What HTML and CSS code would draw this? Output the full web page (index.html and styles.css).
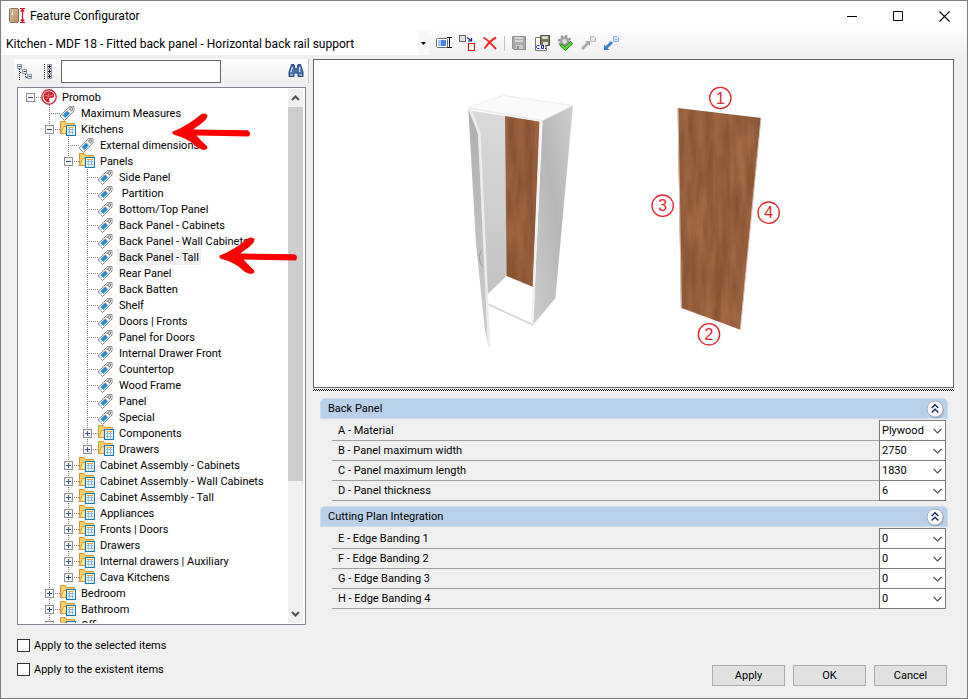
FILE: index.html
```html
<!DOCTYPE html>
<html lang="en">
    <head>
        <meta charset="UTF-8">
        <title>Feature Configurator</title>
        <link rel="stylesheet" href="styles.css">
    </head>
    <body>
        <!-- icons used several times -->
        <svg class="defs" width="0" height="0" aria-hidden="true">
            <symbol id="tag" viewBox="0 0 16 16">
                <path d="M1 11 L10.5 1.5 H15 V6 L5.5 15.5 Z" fill="#f4f4f4" stroke="#8c8c8c" stroke-linejoin="round"/>
                <path d="M9.5 2.8 L11 1.8 H14.7 V5.5 L12.5 7.5 L9 4 Z" fill="#d2d2d2"/>
                <path d="M4 10.3 L8.2 6 L10.6 8.3 L6.3 12.6 Z" fill="#2288d0" stroke="#4aa6de"/>
                <circle cx="12.3" cy="4" r="1.3" fill="#fff" stroke="#777"/>
            </symbol>
            <symbol id="folder" viewBox="0 0 16 16">
                <path d="M.5 12.5 V.5 H5.5 L6.5 2.5 H14.5 V12 Z" fill="#fbcf68" stroke="#d39a3d"/>
                <path d="M1 12.5 L3.5 5.5 H14.5 V12.5 Z" fill="#ffe492" stroke="#d9a041"/>
                <path d="M6.5 4.5 H15.5 V14.5 H6.5 Z" fill="#fff" stroke="#0f7ab8" stroke-width="1.2"/>
                <path d="M8 6.5 H14" stroke="#f0a93c"/>
                <path d="M8 8.5 H14 M8 11.5 H14 M9.5 7 V13.5 M12.5 7 V13.5" stroke="#8fb9d9"/>
            </symbol>
            <symbol id="promob" viewBox="0 0 16 16">
                <circle cx="8" cy="8" r="7.2" fill="#fff" stroke="#c8303a" stroke-width="1.4"/>
                <path d="M9 2.5 C4 1.5 1.5 6 3 9.5 C4 12 6 13.5 8 13.5 C9.5 12.5 7.5 11 8.5 9.5 C9.5 8 11.5 9.5 13 8 C14 5.5 12 3 9 2.5 Z" fill="#d5222e"/>
                <path d="M4 6 L7 7 M7 4 L8 7 L6 10 M9 7 L12 6" fill="none" stroke="#f4b6ba" stroke-width=".6"/>
            </symbol>
            <symbol id="chevron" viewBox="0 0 9 6">
                <path d="M.5 .8 L4.5 4.8 L8.5 .8" fill="none" stroke="#4c4c4c" stroke-width="1.2"/>
            </symbol>
            <symbol id="collapse" viewBox="0 0 20 20">
                <circle cx="11" cy="11.5" r="8" fill="#8b9aae" opacity=".6"/>
                <circle cx="10" cy="10" r="8" fill="#fdfdfe" stroke="#a7b0bf"/>
                <path d="M6.7 9 L10 5.8 L13.3 9 M6.7 13.5 L10 10.3 L13.3 13.5" fill="none" stroke="#1d2c66" stroke-width="1.5"/>
            </symbol>
            <symbol id="arrow" viewBox="0 0 240 112">
                <path d="M2 57 Q50 38 88 5 Q102 -3 109 6 Q112 17 88 34 Q74 44 66 50 L231 52 Q244 60 234 71 L76 68 Q90 84 108 101 Q112 113 94 111 Q80 108 68 95 Q48 77 6 65 Z" fill="#f00"/>
            </symbol>
        </svg>

        <div class="window">
            <header class="titlebar">
                <svg width="17" height="17" viewBox="0 0 17 17">
                    <defs>
                        <linearGradient id="door" x2="1" y2="1">
                            <stop offset="0" stop-color="#dcc19c"/>
                            <stop offset="1" stop-color="#b48d61"/>
                        </linearGradient>
                    </defs>
                    <rect x=".5" y=".5" width="9" height="14" rx="1" fill="url(#door)" stroke="#8c7356"/>
                    <path d="M3.5 4 V7" stroke="#fff"/>
                    <path d="M11 .5 H16 M11 14.5 H16 M13.5 2 V13 M11.8 3.5 L13.5 1.5 L15.2 3.5 M11.8 11.5 L13.5 13.5 L15.2 11.5" fill="none" stroke="#dd1230" stroke-width="1.2"/>
                </svg>
                <h1 class="title">Feature Configurator</h1>
                <div class="win_buttons">
                    <button class="win_button" aria-label="Minimize"><svg width="11" height="11"><path d="M0 5.5 H10" stroke="#000"/></svg></button>
                    <button class="win_button" aria-label="Maximize"><svg width="11" height="11"><path d="M.5 .5 H9.5 V9.5 H.5 Z" fill="none" stroke="#000"/></svg></button>
                    <button class="win_button" aria-label="Close"><svg width="11" height="11"><path d="M.5 .5 L10.5 10.5 M10.5 .5 L.5 10.5" stroke="#000" stroke-width="1.1"/></svg></button>
                </div>
            </header>

            <div class="toolbar">
                <div class="profile">
                    <select class="profile_select" aria-label="Profile">
                        <option>Kitchen - MDF 18 - Fitted back panel - Horizontal back rail support</option>
                    </select>
                    <span class="profile_arrow"><svg width="5" height="3"><path d="M0 0 H5 L2.5 3 Z"/></svg></span>
                </div>
                <button class="tool" aria-label="Rename">
                    <svg width="16" height="16">
                        <rect x=".5" y="3.5" width="11" height="9" rx="1" fill="#fff" stroke="#667085"/>
                        <rect x="2" y="5" width="8" height="6" fill="#4c84e8"/>
                        <path d="M2 5 H5 V11 H2 Z" fill="#a9c6fa"/>
                        <path d="M11 2.5 H16 M11 12.5 H16 M13.5 3 V12" stroke="#111"/>
                    </svg>
                </button>
                <button class="tool" aria-label="Copy">
                    <svg width="16" height="16">
                        <rect x=".5" y=".5" width="6" height="6" fill="#e4e0e8" stroke="#666"/>
                        <path d="M8 2.5 L12 5.5 M12.5 3 V6 H9" fill="none" stroke="#16257d" stroke-width="1.2"/>
                        <rect x="9.5" y="8.5" width="6" height="7" fill="#fff" stroke="#e00b16" stroke-width="1.2"/>
                    </svg>
                </button>
                <button class="tool" aria-label="Delete">
                    <svg width="16" height="16"><path d="M1.5 2.5 C6 5 10 9.5 14 14 M14 2.5 C9 5 5 10 2.5 13.5" fill="none" stroke="#f2262b" stroke-width="2"/></svg>
                </button>
                <span class="separator"></span>
                <button class="tool" aria-label="Save" disabled>
                    <svg width="16" height="16">
                        <path d="M1.5 1.5 H14.5 V14.5 H2.5 L1.5 13.5 Z" fill="#a9a9a9" stroke="#8d8d8d"/>
                        <path d="M4 2 H12 V7 H4 Z" fill="#d9d9d9"/>
                        <path d="M5 10 H12 V14 H5 Z" fill="#ccc"/>
                        <path d="M4.5 4.5 H11.5" stroke="#aaa"/>
                        <path d="M6 11 H8 V14 H6 Z" fill="#858585"/>
                    </svg>
                </button>
                <button class="tool" aria-label="Save as">
                    <svg width="16" height="16">
                        <path d="M1.5 2.5 H12.5 V15.5 H1.5 Z" fill="#fff" stroke="#777"/>
                        <path d="M6.5 .5 H15.5 V10.5 H6.5 Z" fill="#77775b" stroke="#4d4d3c"/>
                        <path d="M8 1 H14 V4 H8 Z" fill="#d6d6c4"/>
                        <path d="M9 7 H14 V10 H9 Z" fill="#ddd"/>
                        <path d="M2 10 H12 V15 H2 Z" fill="#fff"/>
                        <path d="M5.5 10.5 H3.5 L2.5 11.5 V12.5 L3.5 13.5 H5.5 M9.5 10.5 H7.5 V13.5 H9.5 V10 M11.5 10.5 V11.5 M11.5 12.8 V14" fill="none" stroke="#1420d0"/>
                    </svg>
                </button>
                <button class="tool" aria-label="Validate">
                    <svg width="16" height="16">
                        <circle cx="7.5" cy="6.5" r="5.6" fill="none" stroke="#8f8f8f" stroke-width="2" stroke-dasharray="2.2 2.2"/>
                        <circle cx="7.5" cy="6.5" r="3.7" fill="#ddd" stroke="#a1a1a1" stroke-width="2.6"/>
                        <path d="M3 10.5 L5.3 9 L8 11.5 L13.5 6.5 L15.5 9 L8.3 15.5 Z" fill="#5ecf35" stroke="#1b8425"/>
                    </svg>
                </button>
                <button class="tool" aria-label="Export" disabled>
                    <svg width="16" height="16">
                        <path d="M1 13 L6.5 7.5 L5 6 H10 V11 L8.5 9.5 L3 15 Z" fill="#a8a8a8"/>
                        <path d="M10.5 1.5 H14 L15.5 3 V6.5 H10.5 Z" fill="#e2e2e2" stroke="#bcbcbc"/>
                    </svg>
                </button>
                <button class="tool" aria-label="Import">
                    <svg width="16" height="16">
                        <path d="M1 15 V9.5 L2.7 11.2 L8 6 L10 8 L4.7 13.3 L6.4 15 Z" fill="#3d7dca"/>
                        <path d="M10.5 1.5 H14 L15.5 3 V6.5 H10.5 Z" fill="#dcebfb" stroke="#80b2e6"/>
                        <path d="M12 4.5 H14" stroke="#80b2e6"/>
                    </svg>
                </button>
            </div>

            <main class="content">
                <section class="side">
                    <div class="search">
                        <button class="tool" aria-label="Collapse all">
                            <svg width="16" height="17">
                                <path d="M2.5 6 V17 M3 9.5 H6 M8.5 11 V15 M9 14.5 H11" fill="none" stroke="#222" stroke-dasharray="1 1"/>
                                <g fill="#f6f8fa" stroke="#8496a8"><path d="M.5 1.5 H4.5 V5.5 H.5 Z M5.5 6.5 H9.5 V10.5 H5.5 Z M10.5 11.5 H14.5 V15.5 H10.5 Z"/></g>
                                <path d="M1.5 3.5 H4 M6.5 8.5 H9 M11.5 13.5 H14" stroke="#31506f"/>
                            </svg>
                        </button>
                        <button class="tool" aria-label="Expand all">
                            <svg width="16" height="17">
                                <path d="M5.5 1 V16" stroke="#222" stroke-dasharray="1 1"/>
                                <path d="M8.5 1.5 H12.5 V5.5 H8.5 Z M8.5 6.5 H12.5 V10.5 H8.5 Z M8.5 11.5 H12.5 V15.5 H8.5 Z" fill="#f6f8fa" stroke="#8c98a4"/>
                                <path d="M9 3.5 H12 M10.5 2 V5 M9 8.5 H12 M10.5 7 V10 M9 13.5 H12 M10.5 12 V15" stroke="#222"/>
                            </svg>
                        </button>
                        <input class="search_text" type="text" aria-label="Search">
                        <button class="tool find" aria-label="Find">
                            <svg width="16" height="16">
                                <path d="M3.5 1.5 H6 L7 6 H9 L10 1.5 H12.5 L15 9 V13.5 H10 V10 H6 V13.5 H1 V9 Z" fill="#4672af" stroke="#254674"/>
                                <path d="M2.8 9 L4.5 4 M11.5 9 L11.8 4 M2.5 12 H5 M11.5 12 H14" stroke="#dceaff" stroke-width="1.2"/>
                            </svg>
                        </button>
                    </div>

                    <div class="tree_box">
                        <div class="tree_view">
                            <ul class="tree">
                                <li>
                                    <div class="row"><button class="toggle open" aria-label="Collapse"></button><svg class="icon"><use href="#promob"/></svg><span class="label">Promob</span></div>
                                    <ul>
                                        <li><div class="row leaf"><svg class="icon"><use href="#tag"/></svg><span class="label">Maximum Measures</span></div></li>
                                        <li>
                                            <div class="row"><button class="toggle open" aria-label="Collapse"></button><svg class="icon"><use href="#folder"/></svg><span class="label">Kitchens</span></div>
                                            <ul>
                                                <li><div class="row leaf"><svg class="icon"><use href="#tag"/></svg><span class="label">External dimensions</span></div></li>
                                                <li>
                                                    <div class="row"><button class="toggle open" aria-label="Collapse"></button><svg class="icon"><use href="#folder"/></svg><span class="label">Panels</span></div>
                                                    <ul>
                                                        <li><div class="row leaf"><svg class="icon"><use href="#tag"/></svg><span class="label">Side Panel</span></div></li>
                                                        <li><div class="row leaf"><svg class="icon"><use href="#tag"/></svg><span class="label">&nbsp;Partition</span></div></li>
                                                        <li><div class="row leaf"><svg class="icon"><use href="#tag"/></svg><span class="label">Bottom/Top Panel</span></div></li>
                                                        <li><div class="row leaf"><svg class="icon"><use href="#tag"/></svg><span class="label">Back Panel - Cabinets</span></div></li>
                                                        <li><div class="row leaf"><svg class="icon"><use href="#tag"/></svg><span class="label">Back Panel - Wall Cabinets</span></div></li>
                                                        <li><div class="row leaf"><svg class="icon"><use href="#tag"/></svg><span class="label selected">Back Panel - Tall</span></div></li>
                                                        <li><div class="row leaf"><svg class="icon"><use href="#tag"/></svg><span class="label">Rear Panel</span></div></li>
                                                        <li><div class="row leaf"><svg class="icon"><use href="#tag"/></svg><span class="label">Back Batten</span></div></li>
                                                        <li><div class="row leaf"><svg class="icon"><use href="#tag"/></svg><span class="label">Shelf</span></div></li>
                                                        <li><div class="row leaf"><svg class="icon"><use href="#tag"/></svg><span class="label">Doors | Fronts</span></div></li>
                                                        <li><div class="row leaf"><svg class="icon"><use href="#tag"/></svg><span class="label">Panel for Doors</span></div></li>
                                                        <li><div class="row leaf"><svg class="icon"><use href="#tag"/></svg><span class="label">Internal Drawer Front</span></div></li>
                                                        <li><div class="row leaf"><svg class="icon"><use href="#tag"/></svg><span class="label">Countertop</span></div></li>
                                                        <li><div class="row leaf"><svg class="icon"><use href="#tag"/></svg><span class="label">Wood Frame</span></div></li>
                                                        <li><div class="row leaf"><svg class="icon"><use href="#tag"/></svg><span class="label">Panel</span></div></li>
                                                        <li><div class="row leaf"><svg class="icon"><use href="#tag"/></svg><span class="label">Special</span></div></li>
                                                        <li><div class="row"><button class="toggle" aria-label="Expand"></button><svg class="icon"><use href="#folder"/></svg><span class="label">Components</span></div></li>
                                                        <li><div class="row"><button class="toggle" aria-label="Expand"></button><svg class="icon"><use href="#folder"/></svg><span class="label">Drawers</span></div></li>
                                                    </ul>
                                                </li>
                                                <li><div class="row"><button class="toggle" aria-label="Expand"></button><svg class="icon"><use href="#folder"/></svg><span class="label">Cabinet Assembly - Cabinets</span></div></li>
                                                <li><div class="row"><button class="toggle" aria-label="Expand"></button><svg class="icon"><use href="#folder"/></svg><span class="label">Cabinet Assembly - Wall Cabinets</span></div></li>
                                                <li><div class="row"><button class="toggle" aria-label="Expand"></button><svg class="icon"><use href="#folder"/></svg><span class="label">Cabinet Assembly - Tall</span></div></li>
                                                <li><div class="row"><button class="toggle" aria-label="Expand"></button><svg class="icon"><use href="#folder"/></svg><span class="label">Appliances</span></div></li>
                                                <li><div class="row"><button class="toggle" aria-label="Expand"></button><svg class="icon"><use href="#folder"/></svg><span class="label">Fronts | Doors</span></div></li>
                                                <li><div class="row"><button class="toggle" aria-label="Expand"></button><svg class="icon"><use href="#folder"/></svg><span class="label">Drawers</span></div></li>
                                                <li><div class="row"><button class="toggle" aria-label="Expand"></button><svg class="icon"><use href="#folder"/></svg><span class="label">Internal drawers | Auxiliary</span></div></li>
                                                <li><div class="row"><button class="toggle" aria-label="Expand"></button><svg class="icon"><use href="#folder"/></svg><span class="label">Cava Kitchens</span></div></li>
                                            </ul>
                                        </li>
                                        <li><div class="row"><button class="toggle" aria-label="Expand"></button><svg class="icon"><use href="#folder"/></svg><span class="label">Bedroom</span></div></li>
                                        <li><div class="row"><button class="toggle" aria-label="Expand"></button><svg class="icon"><use href="#folder"/></svg><span class="label">Bathroom</span></div></li>
                                        <li><div class="row"><button class="toggle" aria-label="Expand"></button><svg class="icon"><use href="#folder"/></svg><span class="label">Office</span></div></li>
                                    </ul>
                                </li>
                            </ul>
                        </div>
                        <div class="scrollbar">
                            <svg class="scroll_arrow" viewBox="0 0 9 6"><path d="M1 5 L4.5 1.5 L8 5" fill="none" stroke="#505050" stroke-width="2"/></svg>
                            <div class="thumb"></div>
                            <svg class="scroll_arrow" viewBox="0 0 9 6"><path d="M1 1 L4.5 4.5 L8 1" fill="none" stroke="#505050" stroke-width="2"/></svg>
                        </div>
                        <svg class="arrow arrow_kitchens"><use href="#arrow"/></svg>
                        <svg class="arrow arrow_tall"><use href="#arrow"/></svg>
                    </div>

                    <div class="checks">
                        <label class="check"><input type="checkbox">Apply to the selected items</label>
                        <label class="check"><input type="checkbox">Apply to the existent items</label>
                    </div>
                </section>

                <section class="main">
                    <div class="preview">
                        <svg class="drawing" viewBox="0 0 639 327">
                            <defs>
                                <linearGradient id="side" x1="0" y1="1" x2="1" y2="0">
                                    <stop offset="0" stop-color="#cecece"/>
                                    <stop offset=".55" stop-color="#b6b6b6"/>
                                    <stop offset="1" stop-color="#d0d0d0"/>
                                </linearGradient>
                                <linearGradient id="inside" x1="0" y1="0" x2="0" y2="1">
                                    <stop offset="0" stop-color="#dadada"/>
                                    <stop offset="1" stop-color="#c3c3c3"/>
                                </linearGradient>
                                <linearGradient id="leaf" x1="0" y1="0" x2="0" y2="1">
                                    <stop offset="0" stop-color="#aeaeae"/>
                                    <stop offset="1" stop-color="#cecece"/>
                                </linearGradient>
                                <filter id="wood" x="0" y="0" width="100%" height="100%" color-interpolation-filters="sRGB">
                                    <feTurbulence type="fractalNoise" baseFrequency=".04 .006" numOctaves="3" seed="4"/>
                                    <feColorMatrix values="0 0 0 0 .42  0 0 0 0 .24  0 0 0 0 .13  .9 0 0 0 -.2"/>
                                    <feComposite operator="in" in2="SourceGraphic" result="grain"/>
                                    <feMerge><feMergeNode in="SourceGraphic"/><feMergeNode in="grain"/></feMerge>
                                </filter>
                            </defs>
                            <!-- cabinet -->
                            <g transform="translate(136 20) scale(.3333)">
                                <path d="M55 83 L160 46 L369 77 L278 122 Z" fill="#fafafa" stroke="#e6e6e6" stroke-width="2"/>
                                <path d="M65 92 L165 108 L170 588 L105 650 Z" fill="url(#inside)"/>
                                <path d="M165 108 L270 125 L249 621 L170 588 Z" fill="#a16641" filter="url(#wood)"/>
                                <path d="M170 590 L249 622 L246 732 L112 672 L112 645 Z" fill="#fff"/>
                                <path d="M113 672 L249 735" stroke="#d3d3d3" stroke-width="5"/>
                                <path d="M278 122 L369 77 L316 655 L249 735 Z" fill="url(#side)"/>
                                <path d="M272 122 L247 733" stroke="#f3f3f3" stroke-width="7"/>
                                <path d="M55 84 L272 122" stroke="#ededed" stroke-width="5"/>
                                <path d="M55 88 L84 160 L114 795 L104 745 L78 490 Z" fill="url(#leaf)"/>
                                <path d="M56 86 L66 90 L92 160 L121 800 L114 800 L84 162 Z" fill="#ececec"/>
                                <path d="M96 510 C86 520 86 545 98 560" fill="none" stroke="#999" stroke-width="3"/>
                            </g>
                            <!-- back panel with its numbered edges -->
                            <g transform="translate(316 15) scale(.3333)">
                                <path d="M143 99 L393 129 L331 764 L153 698 Z" fill="#a46a45" filter="url(#wood)"/>
                                <path d="M144 99 L154 698 M393 129 L331 764" stroke="#d8c4b4" stroke-width="3"/>
                                <g fill="none" stroke="#e3272d" stroke-width="4">
                                    <circle cx="271" cy="69" r="32"/>
                                    <circle cx="237" cy="778" r="32"/>
                                    <circle cx="98" cy="392" r="32"/>
                                    <circle cx="416" cy="413" r="32"/>
                                </g>
                                <g class="edge">
                                    <text x="271" y="86">1</text>
                                    <text x="237" y="795">2</text>
                                    <text x="98" y="409">3</text>
                                    <text x="416" y="430">4</text>
                                </g>
                            </g>
                        </svg>
                    </div>
                    <div class="splitter"></div>

                    <div class="groups">
                        <section class="group">
                            <h2 class="group_title">Back Panel <button class="fold" aria-label="Collapse"><svg width="20" height="20"><use href="#collapse"/></svg></button></h2>
                            <div class="field"><label for="a">A - Material</label><span class="combo"><select id="a"><option>Plywood</option></select><svg><use href="#chevron"/></svg></span></div>
                            <div class="field"><label for="b">B - Panel maximum width</label><span class="combo"><select id="b"><option>2750</option></select><svg><use href="#chevron"/></svg></span></div>
                            <div class="field"><label for="c">C - Panel maximum length</label><span class="combo"><select id="c"><option>1830</option></select><svg><use href="#chevron"/></svg></span></div>
                            <div class="field"><label for="d">D - Panel thickness</label><span class="combo"><select id="d"><option>6</option></select><svg><use href="#chevron"/></svg></span></div>
                        </section>
                        <section class="group">
                            <h2 class="group_title">Cutting Plan Integration <button class="fold" aria-label="Collapse"><svg width="20" height="20"><use href="#collapse"/></svg></button></h2>
                            <div class="field"><label for="e">E - Edge Banding 1</label><span class="combo"><select id="e"><option>0</option></select><svg><use href="#chevron"/></svg></span></div>
                            <div class="field"><label for="f">F - Edge Banding 2</label><span class="combo"><select id="f"><option>0</option></select><svg><use href="#chevron"/></svg></span></div>
                            <div class="field"><label for="g">G - Edge Banding 3</label><span class="combo"><select id="g"><option>0</option></select><svg><use href="#chevron"/></svg></span></div>
                            <div class="field"><label for="h">H - Edge Banding 4</label><span class="combo"><select id="h"><option>0</option></select><svg><use href="#chevron"/></svg></span></div>
                        </section>
                    </div>

                    <div class="actions">
                        <button class="action">Apply</button>
                        <button class="action">OK</button>
                        <button class="action">Cancel</button>
                    </div>
                </section>
            </main>
        </div>
    </body>
</html>
```

FILE: styles.css
```css
*{
    box-sizing: border-box;
}

body{
    margin: 0;
    font-family: Roboto, "Liberation Sans", sans-serif;
    font-size: 11px;
    color: #000;
}

button, input, select{
    font: inherit;
    color: inherit;
    margin: 0;
    padding: 0;
    border: 0;
    border-radius: 0;
}

button{
    background: none;
}

svg{
    display: block;
    flex: none;
}

.defs{
    position: absolute;
}

.window{
    display: flex;
    flex-direction: column;
    height: 100vh;
    border: 1px solid #7f7f7f;
    background-color: #f0f0f0;
}

/* title bar */
.titlebar{
    display: flex;
    align-items: center;
    height: 30px;
    padding-left: 8px;
    background-color: #fff;
}

.title{
    margin: 0 0 0 4px;
    font-size: 12px;
    font-weight: normal;
}

.win_buttons{
    display: flex;
    margin-left: auto;
}

.win_button{
    display: flex;
    align-items: center;
    justify-content: center;
    width: 46px;
    height: 28px;
}

/* toolbar */
.toolbar{
    display: flex;
    align-items: center;
    gap: 7px;
    height: 24px;
    padding-left: 1px;
    background: linear-gradient(#fcfcfc, #f0f0f0);
}

.profile{
    display: flex;
    width: 427px;
    height: 24px;
    background-color: #fff;
}

.profile_select{
    flex: 1;
    appearance: none;
    padding: 1px 0 0 4px;
    background-color: #fff;
    font-size: 12px;
}

.profile_arrow{
    display: flex;
    align-items: center;
    justify-content: center;
    width: 11px;
    background-color: #f8f8f8;
}

.tool{
    flex: none;
    min-width: 16px;
}

.separator{
    width: 1px;
    height: 15px;
    margin: 0 -1px;
    background-color: #c4c4c4;
}

.content{
    display: grid;
    grid-template-columns: 295px minmax(0, 1fr);
    gap: 4px;
    flex: 1;
    min-height: 0;
    padding: 4px 13px 12px;
}

.side, .main{
    display: flex;
    flex-direction: column;
    min-width: 0;
    min-height: 0;
}

/* search strip */
.search{
    display: flex;
    align-items: center;
    gap: 6px;
    height: 24px;
    margin-bottom: 4px;
    padding: 0 4px 0 3px;
    border-right: 1px solid #c8c8c8;
    background: linear-gradient(#fcfcfc, #f0f0f0);
}

.search_text{
    width: 160px;
    height: 23px;
    padding: 0 4px;
    border: 1px solid #646464;
    background-color: #fff;
}

.find{
    margin-left: auto;
}

/* tree */
.tree_box{
    display: flex;
    position: relative;
    flex: 1;
    min-height: 0;
    margin: 0 3px;
    padding: 1px 2px 1px 3px;
    border: 1px solid #828790;
    background-color: #fff;
}

.tree_view{
    flex: 1;
    overflow: hidden;
}

.tree, .tree ul{
    margin: 0;
    padding: 0;
    list-style: none;
}

.tree ul{
    padding-left: 19px;
}

.tree ul > li{
    background: repeating-linear-gradient(#808080 0 1px, transparent 1px 2px) 9px 0 / 1px 100% no-repeat;
}

.tree ul > li:last-child{
    background-size: 1px 8px;
}

.row{
    display: flex;
    align-items: center;
    height: 16px;
    padding-left: 5px;
    background: repeating-linear-gradient(90deg, #808080 0 1px, transparent 1px 2px) 9px 8px / 11px 1px no-repeat;
}

.leaf{
    padding-left: 19px;
}

.leaf .icon{
    margin-right: 4px;
}

.toggle{
    width: 9px;
    height: 9px;
    margin-right: 6px;
    border: 1px solid #919191;
    background:
        linear-gradient(#3a5596, #3a5596) center / 5px 1px no-repeat,
        linear-gradient(#3a5596, #3a5596) center / 1px 5px no-repeat,
        #f4f4f4;
}

.open{
    background:
        linear-gradient(#3a5596, #3a5596) center / 5px 1px no-repeat,
        #f4f4f4;
}

.icon{
    width: 16px;
    height: 16px;
    margin-right: 3px;
}

.label{
    height: 16px;
    padding: 0 2px;
    line-height: 17px;
    white-space: nowrap;
}

.selected{
    background-color: #f0f0f0;
}

.scrollbar{
    display: flex;
    flex-direction: column;
    align-items: center;
    justify-content: space-between;
    width: 15px;
    background-color: #f0f0f0;
}

.scroll_arrow{
    width: 9px;
    height: 6px;
    margin: 6px 0;
}

.thumb{
    width: 15px;
    height: 70%;
    margin-bottom: auto;
    background-color: #cdcdcd;
}

.arrow{
    position: absolute;
    width: 80px;
    height: 37px;
}

.arrow_kitchens{
    left: 153px;
    top: 25px;
}

.arrow_tall{
    left: 200px;
    top: 149px;
}

.checks{
    display: flex;
    flex-direction: column;
    gap: 8px;
    padding: 12px 3px 9px;
}

.check{
    display: flex;
    align-items: center;
    gap: 4px;
    height: 16px;
}

.check input{
    appearance: none;
    width: 13px;
    height: 13px;
    border: 1px solid #333;
    background-color: #fff;
}

/* preview */
.preview{
    border: 1px solid #646464;
    background-color: #fff;
}

.drawing{
    width: 100%;
    height: 327px;
}

.edge{
    fill: #e3272d;
    font-family: "Liberation Sans", Arial, sans-serif;
    font-size: 48px;
    text-anchor: middle;
}

.splitter{
    height: 2px;
    margin-top: 1px;
    background: repeating-conic-gradient(#000 0 25%, #fff 0 50%) 0 0 / 2px 2px;
}

/* properties */
.groups{
    display: flex;
    flex-direction: column;
    gap: 5px;
    padding: 7px 6px 0 7px;
}

.group_title{
    display: flex;
    align-items: center;
    justify-content: space-between;
    height: 21px;
    margin: 0 0 1px;
    padding: 0 2px 0 7px;
    border: 1px solid #cbdcef;
    border-radius: 5px 5px 0 0;
    background-color: #b9d0ea;
    font-size: 11px;
    font-weight: normal;
}

.field{
    display: flex;
    height: 20px;
    margin: 0 2px 0 12px;
}

.field:last-child{
    height: 21px;
}

.field label{
    flex: 1;
    height: 21px;
    padding-left: 6px;
    border-bottom: 1px solid #a0a0a0;
    line-height: 22px;
}

.combo{
    display: grid;
    align-items: center;
    width: 67px;
    height: 21px;
}

.combo select{
    grid-area: 1 / 1;
    appearance: none;
    width: 100%;
    height: 21px;
    padding-left: 2px;
    border: 1px solid #7a7a7a;
    background-color: #fff;
}

.combo svg{
    grid-area: 1 / 1;
    justify-self: end;
    width: 9px;
    height: 6px;
    margin-right: 4px;
    pointer-events: none;
}

.actions{
    display: flex;
    justify-content: flex-end;
    gap: 8px;
    margin-top: auto;
    padding-right: 7px;
}

.action{
    width: 73px;
    height: 21px;
    border: 1px solid #adadad;
    background-color: #e1e1e1;
}
```
